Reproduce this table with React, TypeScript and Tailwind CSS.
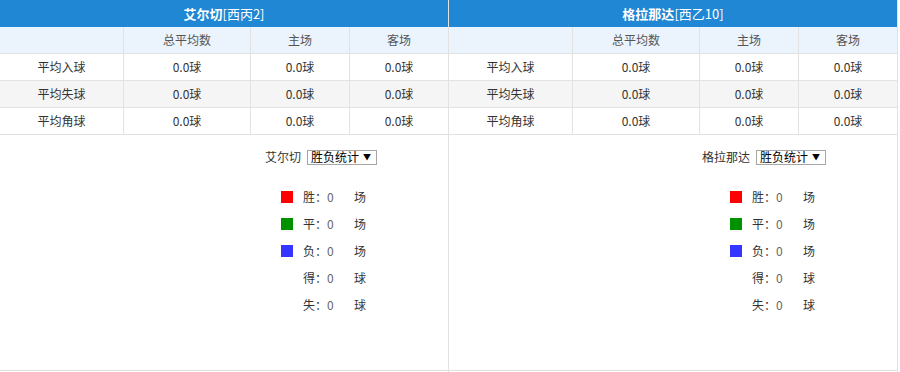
const font = { fontFamily: '"Noto Sans CJK SC", "Liberation Sans", sans-serif' }

type Team = { name: string; league: string }

const teams: Team[] = [
  { name: '艾尔切', league: '西丙2' },
  { name: '格拉那达', league: '西乙10' },
]

const rows = ['平均入球', '平均失球', '平均角球']

const legend = [
  { label: '胜', unit: '场', color: 'bg-[#ff0000]' },
  { label: '平', unit: '场', color: 'bg-[#009100]' },
  { label: '负', unit: '场', color: 'bg-[#3535ff]' },
  { label: '得', unit: '球', color: '' },
  { label: '失', unit: '球', color: '' },
]

function TeamPanel({ team }: { team: Team }) {
  return (
    <div className="w-[449px] border-r border-[#e2e2e2] flex flex-col">
      {/* ── Title bar ─────────────────────────────── */}
      <div className="h-[27px] bg-[#1f87d3] text-white text-[13px] flex items-center justify-center">
        <span className="font-bold">{team.name}</span>
        <span>[{team.league}]</span>
      </div>

      {/* ── Averages table ────────────────────────── */}
      <div className="grid grid-cols-[124px_127px_99px_1fr] text-[12px] text-[#333]">
        {['', '总平均数', '主场', '客场'].map((h, i) => (
          <div
            key={i}
            className={`h-[27px] flex items-center justify-center bg-[#ebf3fd] text-[#555] border-b border-[#e2e2e2] ${i < 3 ? 'border-r' : ''}`}
          >
            {h}
          </div>
        ))}
        {rows.map((r, ri) =>
          [r, '0.0球', '0.0球', '0.0球'].map((c, ci) => (
            <div
              key={`${ri}-${ci}`}
              className={`h-[27px] flex items-center justify-center border-b border-[#e2e2e2] ${ci < 3 ? 'border-r' : ''} ${ri === 1 ? 'bg-[#f5f5f5]' : 'bg-white'}`}
            >
              {c}
            </div>
          ))
        )}
      </div>

      {/* ── Win / loss stats ──────────────────────── */}
      <div className="h-[236px] border-b border-[#e2e2e2] text-[12px] text-[#333]">
        <div className="w-[377px] flex justify-end items-center gap-[6px] pt-[13px]">
          <span>{team.name}</span>
          <div className="h-[15px] w-[70px] border border-[#a6a6a6] flex items-center justify-between pl-[3px] pr-[5px] leading-none text-black">
            <span>胜负统计</span>
            <span className="text-[8px]">▼</span>
          </div>
        </div>
        <div className="pl-[281px] pt-[17px] flex flex-col">
          {legend.map((l) => (
            <div key={l.label} className="h-[27px] flex items-center">
              <span className={`w-[12px] h-[12px] ${l.color}`} />
              <span className="ml-[10px]">{l.label}：</span>
              <span className="text-[#666] w-[27px]">0</span>
              <span>{l.unit}</span>
            </div>
          ))}
        </div>
      </div>
    </div>
  )
}

export default function App() {
  return (
    <div className="w-[900px] h-[372px] bg-white flex" style={font}>
      {teams.map((t) => (
        <TeamPanel key={t.name} team={t} />
      ))}
    </div>
  )
}
